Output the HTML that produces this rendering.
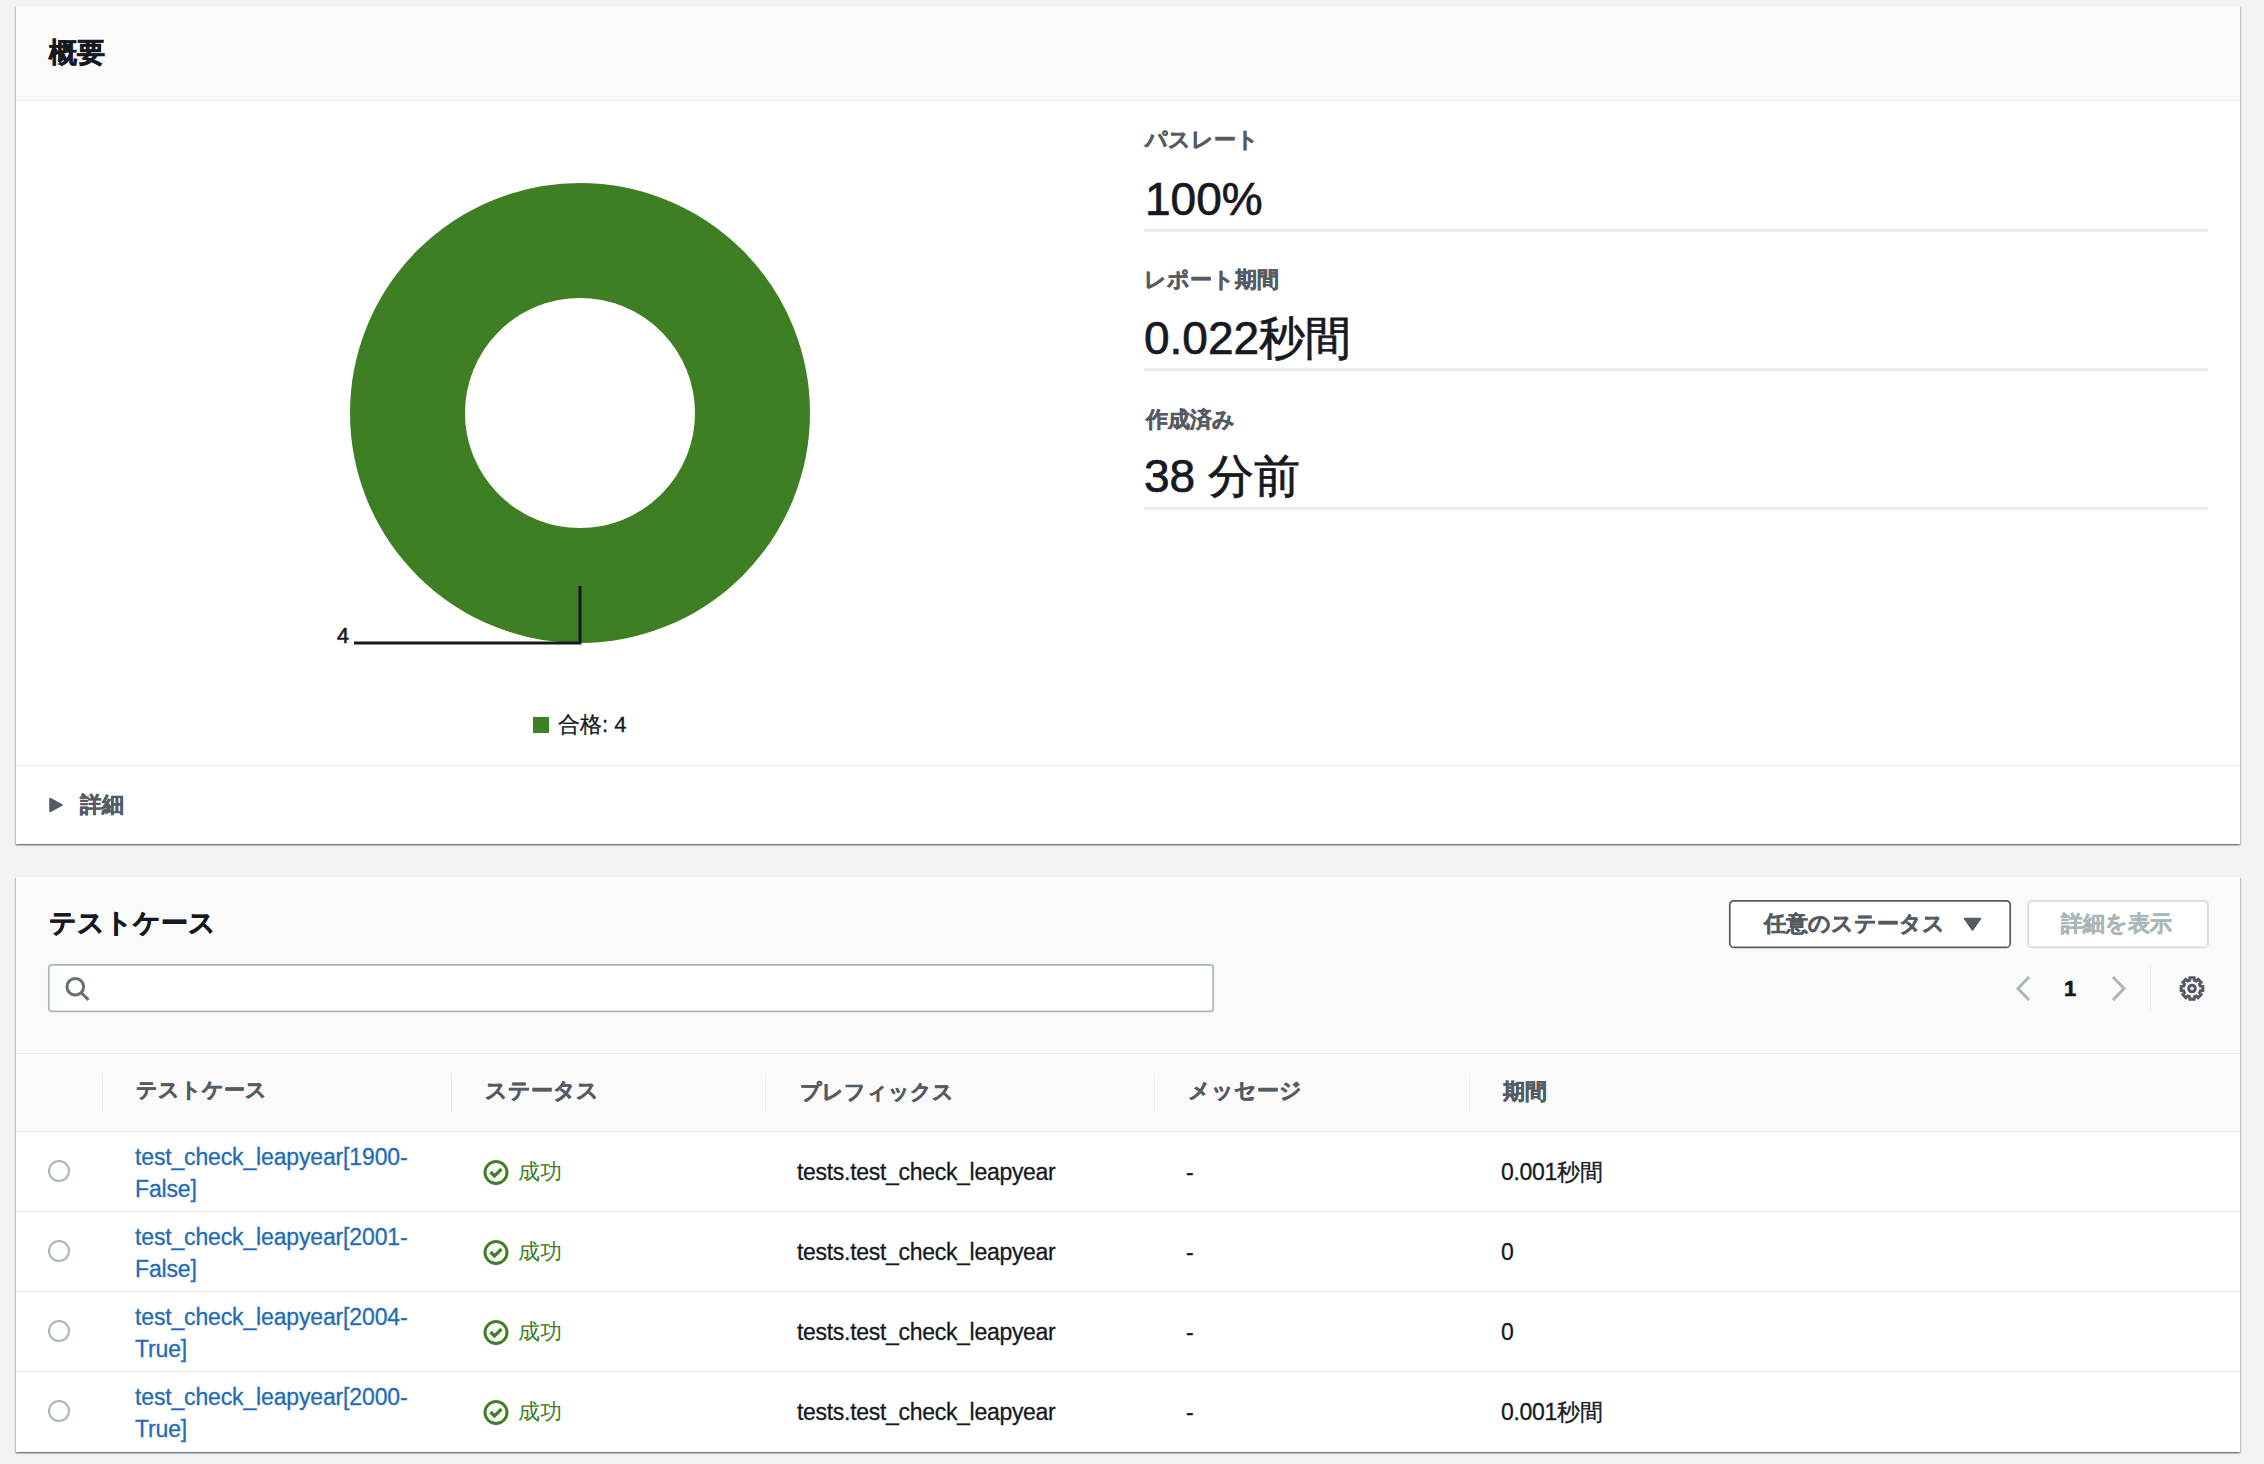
<!DOCTYPE html>
<html><head><meta charset="utf-8">
<style>
html,body{margin:0;padding:0}
body{width:2264px;height:1464px;overflow:hidden;position:relative;background:#f2f3f3;font-family:"Liberation Sans",sans-serif;color:#16191f}
.card{position:absolute;left:16px;width:2224px;background:#fff;box-shadow:0 1.5px 1.5px 0 rgba(0,28,36,.38),1px 1px 1.5px 0 rgba(0,28,36,.18),-1px 1px 1.5px 0 rgba(0,28,36,.18),0 -0.5px 1px 0 rgba(0,28,36,.08)}
.abs{position:absolute}
.t{position:absolute;white-space:nowrap;line-height:1}
.b{font-weight:bold;-webkit-text-stroke:0.6px currentColor}
.lbl{color:#545b64;font-weight:bold;-webkit-text-stroke:0.5px currentColor}
.hl{position:absolute;background:#eaeded}
.link{color:#236cb5;font-size:23px;line-height:32px;letter-spacing:-0.15px;-webkit-text-stroke:0.3px currentColor}
.body{font-size:23px;letter-spacing:-0.3px;-webkit-text-stroke:0.3px currentColor}
.big{-webkit-text-stroke:0.7px currentColor}
.body2{-webkit-text-stroke:0.3px currentColor}
</style></head><body>

<!-- Card 1 -->
<div class="card" style="top:6px;height:838px">
  <div class="abs" style="left:0;top:0;width:2224px;height:94px;background:#fafafa;border-bottom:1px solid #eaeded"></div>
</div>
<div class="t b" id="h1" style="left:49px;top:39px;font-size:28px">概要</div>

<!-- donut -->
<svg class="abs" style="left:0;top:0" width="1100" height="760">
  <circle cx="580" cy="413" r="172.5" fill="none" stroke="#3f7f24" stroke-width="115"/>
  <polyline points="580,586 580,643 354,643" fill="none" stroke="#16191f" stroke-width="3"/>
</svg>
<div class="t body2" id="four" style="left:337px;top:626px;font-size:21.5px;-webkit-text-stroke:0.6px currentColor;letter-spacing:0">4</div>
<div class="abs" style="left:533px;top:717px;width:16px;height:16px;background:#3f7f24"></div>
<div class="t body2" id="legend" style="left:558px;top:714px;font-size:22px">合格: 4</div>

<!-- right stats -->
<div class="t lbl" id="l1" style="left:1145px;top:129px;font-size:21.6px">パスレート</div>
<div class="t big" id="v1" style="left:1145px;top:176px;font-size:46px">100%</div>
<div class="hl" style="left:1144px;top:229px;width:1064px;height:3px"></div>
<div class="t lbl" id="l2" style="left:1144px;top:269px;font-size:21.6px">レポート期間</div>
<div class="t big" id="v2" style="left:1144px;top:315px;font-size:46px">0.022秒間</div>
<div class="hl" style="left:1144px;top:368px;width:1064px;height:3px"></div>
<div class="t lbl" id="l3" style="left:1146px;top:409px;font-size:21.6px">作成済み</div>
<div class="t big" id="v3" style="left:1144px;top:453px;font-size:46px">38 分前</div>
<div class="hl" style="left:1144px;top:507px;width:1064px;height:3px"></div>

<div class="hl" style="left:16px;top:765px;width:2224px;height:1px"></div>
<svg class="abs" style="left:49px;top:797px" width="14" height="16"><path d="M1,1.5 L13,8 L1,14.5 Z" fill="#545b64" stroke="#545b64" stroke-width="1.5" stroke-linejoin="round"/></svg>
<div class="t lbl" id="det" style="left:80px;top:794px;font-size:21.6px">詳細</div>

<!-- Card 2 -->
<div class="card" style="top:877px;height:575px">
  <div class="abs" style="left:0;top:0;width:2224px;height:176px;background:#fafafa;border-bottom:1px solid #eaeded"></div>
  <div class="abs" style="left:0;top:177px;width:2224px;height:77px;background:#fafafa;border-bottom:1px solid #eaeded"></div>
</div>
<div class="t b" id="h2" style="left:49px;top:909px;font-size:27.2px">テストケース</div>


<!-- buttons -->
<svg class="abs" style="left:1725px;top:896px" width="292" height="58"><rect x="4.8" y="4.8" width="280.4" height="46.6" rx="4" fill="#fff" stroke="#545b64" stroke-width="1.7"/></svg>
<div class="t lbl" id="btn1" style="left:1764px;top:913px;font-size:21.8px">任意のステータス</div>
<svg class="abs" style="left:1963px;top:917px" width="19" height="15"><path d="M1.5,1.5 L17.5,1.5 L9.5,13 Z" fill="#545b64" stroke="#545b64" stroke-width="1.5" stroke-linejoin="round"/></svg>
<svg class="abs" style="left:2023px;top:896px" width="190" height="58"><rect x="5.3" y="4.8" width="179.6" height="46.6" rx="4" fill="#fff" stroke="#d5dbdb" stroke-width="1.7"/></svg>
<div class="t lbl" id="btn2" style="left:2061px;top:913px;font-size:21.8px;color:#aab7b8">詳細を表示</div>

<!-- search -->
<svg class="abs" style="left:44px;top:960px" width="1176" height="58"><rect x="4.8" y="4.8" width="1164.4" height="46.6" rx="3" fill="#fff" stroke="#aab7b8" stroke-width="1.7"/></svg>
<svg class="abs" style="left:60px;top:972px" width="36" height="32"><circle cx="15.3" cy="14.75" r="8.3" fill="none" stroke="#687078" stroke-width="3"/><line x1="21.5" y1="21" x2="28.5" y2="27.8" stroke="#687078" stroke-width="3"/></svg>

<!-- pagination -->
<svg class="abs" style="left:2010px;top:972px" width="130" height="34">
  <polyline points="19,5 8,16.5 19,28" fill="none" stroke="#aab7b8" stroke-width="3"/>
  <polyline points="103,5 114,16.5 103,28" fill="none" stroke="#aab7b8" stroke-width="3"/>
</svg>
<div class="t b" id="pg1" style="left:2064px;top:978px;font-size:22px">1</div>
<div class="abs" style="left:2150px;top:964px;width:1px;height:48px;background:#eaeded"></div>
<svg class="abs" style="left:2172px;top:968px" width="40" height="40" id="gear">
  <g transform="translate(20,20.5)" fill="none" stroke="#545b64" stroke-width="3">
    <circle r="3.3"/>
    <path d="M-2.37,-8.27 L-2.10,-10.80 L2.10,-10.80 L2.37,-8.27 L4.17,-7.52 L6.15,-9.12 L9.12,-6.15 L7.52,-4.17 L8.27,-2.37 L10.80,-2.10 L10.80,2.10 L8.27,2.37 L7.52,4.17 L9.12,6.15 L6.15,9.12 L4.17,7.52 L2.37,8.27 L2.10,10.80 L-2.10,10.80 L-2.37,8.27 L-4.17,7.52 L-6.15,9.12 L-9.12,6.15 L-7.52,4.17 L-8.27,2.37 L-10.80,2.10 L-10.80,-2.10 L-8.27,-2.37 L-7.52,-4.17 L-9.12,-6.15 L-6.15,-9.12 L-4.17,-7.52 Z" stroke-linejoin="miter"/>
  </g>
</svg>

<!-- table header -->
<div class="abs" style="left:102px;top:1073px;width:1px;height:39px;background:#eaeded"></div>
<div class="abs" style="left:451px;top:1073px;width:1px;height:39px;background:#eaeded"></div>
<div class="abs" style="left:765px;top:1073px;width:1px;height:39px;background:#eaeded"></div>
<div class="abs" style="left:1154px;top:1073px;width:1px;height:39px;background:#eaeded"></div>
<div class="abs" style="left:1469px;top:1073px;width:1px;height:39px;background:#eaeded"></div>
<div class="t lbl" id="th1" style="left:136px;top:1080px;font-size:21.3px">テストケース</div>
<div class="t lbl" id="th2" style="left:485px;top:1080px;font-size:21.8px">ステータス</div>
<div class="t lbl" id="th3" style="left:800px;top:1081px;font-size:21px">プレフィックス</div>
<div class="t lbl" id="th4" style="left:1188px;top:1080px;font-size:21.6px">メッセージ</div>
<div class="t lbl" id="th5" style="left:1503px;top:1081px;font-size:21.6px">期間</div>

<div class="hl" style="left:16px;top:1211px;width:2224px;height:1px"></div>
<svg class="abs" style="left:46px;top:1158px" width="26" height="26"><circle cx="13" cy="13" r="10" fill="#fff" stroke="#aab7b8" stroke-width="2"/></svg>
<div class="t link" style="left:135px;top:1141px">test_check_leapyear[1900-<br>False]</div>
<svg class="abs" style="left:481px;top:1158px" width="30" height="30"><circle cx="15" cy="14.5" r="11" fill="none" stroke="#3f7f24" stroke-width="3"/><polyline points="9.5,14 13.5,18 20.5,11" fill="none" stroke="#3f7f24" stroke-width="3.2"/></svg>
<div class="t" style="left:518px;top:1161px;font-size:22px;color:#3f7f24">成功</div>
<div class="t body" style="left:797px;top:1161px">tests.test_check_leapyear</div>
<div class="t body" style="left:1186px;top:1161px">-</div>
<div class="t body" style="left:1501px;top:1161px">0.001秒間</div>

<div class="hl" style="left:16px;top:1291px;width:2224px;height:1px"></div>
<svg class="abs" style="left:46px;top:1238px" width="26" height="26"><circle cx="13" cy="13" r="10" fill="#fff" stroke="#aab7b8" stroke-width="2"/></svg>
<div class="t link" style="left:135px;top:1221px">test_check_leapyear[2001-<br>False]</div>
<svg class="abs" style="left:481px;top:1238px" width="30" height="30"><circle cx="15" cy="14.5" r="11" fill="none" stroke="#3f7f24" stroke-width="3"/><polyline points="9.5,14 13.5,18 20.5,11" fill="none" stroke="#3f7f24" stroke-width="3.2"/></svg>
<div class="t" style="left:518px;top:1241px;font-size:22px;color:#3f7f24">成功</div>
<div class="t body" style="left:797px;top:1241px">tests.test_check_leapyear</div>
<div class="t body" style="left:1186px;top:1241px">-</div>
<div class="t body" style="left:1501px;top:1241px">0</div>

<div class="hl" style="left:16px;top:1371px;width:2224px;height:1px"></div>
<svg class="abs" style="left:46px;top:1318px" width="26" height="26"><circle cx="13" cy="13" r="10" fill="#fff" stroke="#aab7b8" stroke-width="2"/></svg>
<div class="t link" style="left:135px;top:1301px">test_check_leapyear[2004-<br>True]</div>
<svg class="abs" style="left:481px;top:1318px" width="30" height="30"><circle cx="15" cy="14.5" r="11" fill="none" stroke="#3f7f24" stroke-width="3"/><polyline points="9.5,14 13.5,18 20.5,11" fill="none" stroke="#3f7f24" stroke-width="3.2"/></svg>
<div class="t" style="left:518px;top:1321px;font-size:22px;color:#3f7f24">成功</div>
<div class="t body" style="left:797px;top:1321px">tests.test_check_leapyear</div>
<div class="t body" style="left:1186px;top:1321px">-</div>
<div class="t body" style="left:1501px;top:1321px">0</div>

<svg class="abs" style="left:46px;top:1398px" width="26" height="26"><circle cx="13" cy="13" r="10" fill="#fff" stroke="#aab7b8" stroke-width="2"/></svg>
<div class="t link" style="left:135px;top:1381px">test_check_leapyear[2000-<br>True]</div>
<svg class="abs" style="left:481px;top:1398px" width="30" height="30"><circle cx="15" cy="14.5" r="11" fill="none" stroke="#3f7f24" stroke-width="3"/><polyline points="9.5,14 13.5,18 20.5,11" fill="none" stroke="#3f7f24" stroke-width="3.2"/></svg>
<div class="t" style="left:518px;top:1401px;font-size:22px;color:#3f7f24">成功</div>
<div class="t body" style="left:797px;top:1401px">tests.test_check_leapyear</div>
<div class="t body" style="left:1186px;top:1401px">-</div>
<div class="t body" style="left:1501px;top:1401px">0.001秒間</div>

</body></html>
